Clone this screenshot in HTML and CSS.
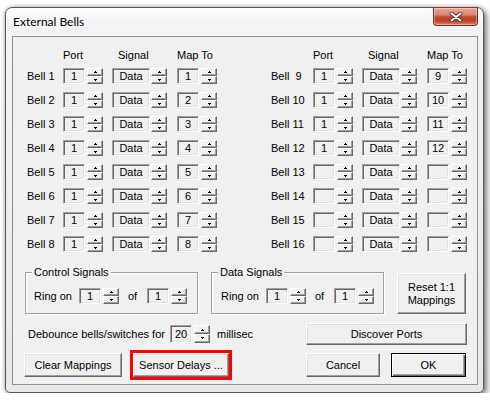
FILE: index.html
```html
<!DOCTYPE html>
<html>
<head>
<meta charset="utf-8">
<title>External Bells</title>
<link rel="stylesheet" href="styles.css">
</head>
<body>
<div class="window">
  <div class="titlebar">
    <span class="title">External Bells</span>
    <span class="close"><svg width="14" height="10" viewBox="0 0 14 10"><path d="M2.5 1.5 L11.5 8.5 M11.5 1.5 L2.5 8.5" stroke="#3b3b3b" stroke-width="3.6" stroke-linecap="round"/><path d="M2.5 1.5 L11.5 8.5 M11.5 1.5 L2.5 8.5" stroke="#fff" stroke-width="1.8" stroke-linecap="round"/></svg></span>
  </div>
  <div class="client">
    <div class="bells">
      <div class="col">
        <div class="hdr"><span class="h-port">Port</span><span class="h-sig">Signal</span><span class="h-map">Map To</span></div>
        <div class="row"><span class="lbl">Bell 1</span><span class="f f-port"><span class="box w22">1</span><span class="ud"><b class="u"></b><b class="d"></b></span></span><span class="f f-sig"><span class="box w38">Data</span><span class="ud"><b class="u"></b><b class="d"></b></span></span><span class="f f-map"><span class="box w22">1</span><span class="ud"><b class="u"></b><b class="d"></b></span></span></div>
        <div class="row"><span class="lbl">Bell 2</span><span class="f f-port"><span class="box w22">1</span><span class="ud"><b class="u"></b><b class="d"></b></span></span><span class="f f-sig"><span class="box w38">Data</span><span class="ud"><b class="u"></b><b class="d"></b></span></span><span class="f f-map"><span class="box w22">2</span><span class="ud"><b class="u"></b><b class="d"></b></span></span></div>
        <div class="row"><span class="lbl">Bell 3</span><span class="f f-port"><span class="box w22">1</span><span class="ud"><b class="u"></b><b class="d"></b></span></span><span class="f f-sig"><span class="box w38">Data</span><span class="ud"><b class="u"></b><b class="d"></b></span></span><span class="f f-map"><span class="box w22">3</span><span class="ud"><b class="u"></b><b class="d"></b></span></span></div>
        <div class="row"><span class="lbl">Bell 4</span><span class="f f-port"><span class="box w22">1</span><span class="ud"><b class="u"></b><b class="d"></b></span></span><span class="f f-sig"><span class="box w38">Data</span><span class="ud"><b class="u"></b><b class="d"></b></span></span><span class="f f-map"><span class="box w22">4</span><span class="ud"><b class="u"></b><b class="d"></b></span></span></div>
        <div class="row"><span class="lbl">Bell 5</span><span class="f f-port"><span class="box w22">1</span><span class="ud"><b class="u"></b><b class="d"></b></span></span><span class="f f-sig"><span class="box w38">Data</span><span class="ud"><b class="u"></b><b class="d"></b></span></span><span class="f f-map"><span class="box w22">5</span><span class="ud"><b class="u"></b><b class="d"></b></span></span></div>
        <div class="row"><span class="lbl">Bell 6</span><span class="f f-port"><span class="box w22">1</span><span class="ud"><b class="u"></b><b class="d"></b></span></span><span class="f f-sig"><span class="box w38">Data</span><span class="ud"><b class="u"></b><b class="d"></b></span></span><span class="f f-map"><span class="box w22">6</span><span class="ud"><b class="u"></b><b class="d"></b></span></span></div>
        <div class="row"><span class="lbl">Bell 7</span><span class="f f-port"><span class="box w22">1</span><span class="ud"><b class="u"></b><b class="d"></b></span></span><span class="f f-sig"><span class="box w38">Data</span><span class="ud"><b class="u"></b><b class="d"></b></span></span><span class="f f-map"><span class="box w22">7</span><span class="ud"><b class="u"></b><b class="d"></b></span></span></div>
        <div class="row"><span class="lbl">Bell 8</span><span class="f f-port"><span class="box w22">1</span><span class="ud"><b class="u"></b><b class="d"></b></span></span><span class="f f-sig"><span class="box w38">Data</span><span class="ud"><b class="u"></b><b class="d"></b></span></span><span class="f f-map"><span class="box w22">8</span><span class="ud"><b class="u"></b><b class="d"></b></span></span></div>
      </div>
      <div class="col col-right">
        <div class="hdr"><span class="h-port">Port</span><span class="h-sig">Signal</span><span class="h-map">Map To</span></div>
        <div class="row"><span class="lbl">Bell&nbsp; 9</span><span class="f f-port"><span class="box w22">1</span><span class="ud"><b class="u"></b><b class="d"></b></span></span><span class="f f-sig"><span class="box w38">Data</span><span class="ud"><b class="u"></b><b class="d"></b></span></span><span class="f f-map"><span class="box w22">9</span><span class="ud"><b class="u"></b><b class="d"></b></span></span></div>
        <div class="row"><span class="lbl">Bell 10</span><span class="f f-port"><span class="box w22">1</span><span class="ud"><b class="u"></b><b class="d"></b></span></span><span class="f f-sig"><span class="box w38">Data</span><span class="ud"><b class="u"></b><b class="d"></b></span></span><span class="f f-map"><span class="box w22">10</span><span class="ud"><b class="u"></b><b class="d"></b></span></span></div>
        <div class="row"><span class="lbl">Bell 11</span><span class="f f-port"><span class="box w22">1</span><span class="ud"><b class="u"></b><b class="d"></b></span></span><span class="f f-sig"><span class="box w38">Data</span><span class="ud"><b class="u"></b><b class="d"></b></span></span><span class="f f-map"><span class="box w22">11</span><span class="ud"><b class="u"></b><b class="d"></b></span></span></div>
        <div class="row"><span class="lbl">Bell 12</span><span class="f f-port"><span class="box w22">1</span><span class="ud"><b class="u"></b><b class="d"></b></span></span><span class="f f-sig"><span class="box w38">Data</span><span class="ud"><b class="u"></b><b class="d"></b></span></span><span class="f f-map"><span class="box w22">12</span><span class="ud"><b class="u"></b><b class="d"></b></span></span></div>
        <div class="row"><span class="lbl">Bell 13</span><span class="f f-port"><span class="box w22"></span><span class="ud"><b class="u"></b><b class="d"></b></span></span><span class="f f-sig"><span class="box w38">Data</span><span class="ud"><b class="u"></b><b class="d"></b></span></span><span class="f f-map"><span class="box w22"></span><span class="ud"><b class="u"></b><b class="d"></b></span></span></div>
        <div class="row"><span class="lbl">Bell 14</span><span class="f f-port"><span class="box w22"></span><span class="ud"><b class="u"></b><b class="d"></b></span></span><span class="f f-sig"><span class="box w38">Data</span><span class="ud"><b class="u"></b><b class="d"></b></span></span><span class="f f-map"><span class="box w22"></span><span class="ud"><b class="u"></b><b class="d"></b></span></span></div>
        <div class="row"><span class="lbl">Bell 15</span><span class="f f-port"><span class="box w22"></span><span class="ud"><b class="u"></b><b class="d"></b></span></span><span class="f f-sig"><span class="box w38">Data</span><span class="ud"><b class="u"></b><b class="d"></b></span></span><span class="f f-map"><span class="box w22"></span><span class="ud"><b class="u"></b><b class="d"></b></span></span></div>
        <div class="row"><span class="lbl">Bell 16</span><span class="f f-port"><span class="box w22"></span><span class="ud"><b class="u"></b><b class="d"></b></span></span><span class="f f-sig"><span class="box w38">Data</span><span class="ud"><b class="u"></b><b class="d"></b></span></span><span class="f f-map"><span class="box w22"></span><span class="ud"><b class="u"></b><b class="d"></b></span></span></div>
      </div>
    </div>

    <div class="groups">
      <div class="group">
        <span class="legend">Control Signals</span>
        <div class="grow"><span class="ring">Ring on</span><span class="f f-port"><span class="box w22">1</span><span class="ud"><b class="u"></b><b class="d"></b></span></span><span class="of">of</span><span class="f f-port"><span class="box w22">1</span><span class="ud"><b class="u"></b><b class="d"></b></span></span></div>
      </div>
      <div class="group group-data">
        <span class="legend">Data Signals</span>
        <div class="grow"><span class="ring">Ring on</span><span class="f f-port"><span class="box w22">1</span><span class="ud"><b class="u"></b><b class="d"></b></span></span><span class="of">of</span><span class="f f-port"><span class="box w22">1</span><span class="ud"><b class="u"></b><b class="d"></b></span></span></div>
      </div>
      <button class="btn btn-reset">Reset 1:1<br>Mappings</button>
    </div>

    <div class="debounce">
      <span class="deb-text">Debounce bells/switches for</span>
      <span class="f f-port f-tall"><span class="box w22">20</span><span class="ud"><b class="u"></b><b class="d"></b></span></span>
      <span class="ms">millisec</span>
      <button class="btn btn-discover">Discover Ports</button>
    </div>

    <div class="actions">
      <button class="btn btn-clear">Clear Mappings</button>
      <button class="btn btn-sensor">Sensor Delays ...</button>
      <button class="btn btn-cancel">Cancel</button>
      <button class="btn btn-ok">OK</button>
    </div>
  </div>
</div>
</body>
</html>
```

FILE: styles.css
```css
* { box-sizing: border-box; }
html, body { margin: 0; padding: 0; background: #fff; }
body {
  font-family: "Liberation Sans", Arial, sans-serif;
  font-size: 11px;
  color: #000;
}

.window {
  margin: 7px 0 0 5px;
  width: 479px;
  height: 386px;
  border: 1px solid #585858;
  border-radius: 7px 7px 5px 5px;
  background: linear-gradient(#fdfdfd 0, #f2f3f4 20px, #e6e9ec 100%);
  box-shadow: 0 0 4px rgba(0,0,0,.3), 3px 3px 6px rgba(0,0,0,.45);
  padding: 0 5px 0 6px;
  display: flex;
  flex-direction: column;
}

.titlebar {
  height: 28px;
  display: flex;
  justify-content: space-between;
  align-items: flex-start;
  padding-left: 1px;
}
.title {
  font-family: Lato, "Liberation Sans", sans-serif;
  font-size: 12px;
  line-height: 28px;
  color: #000;
}
.close {
  width: 45px;
  height: 19px;
  margin-top: -1px;
  border: 1px solid #7a2a1e;
  border-top-color: #8a3a2e;
  border-radius: 0 0 4px 4px;
  background: linear-gradient(#e9a597 0%, #dc8571 40%, #c7472f 52%, #c04028 75%, #d9806a 100%);
  box-shadow: inset 0 0 0 1px rgba(255,255,255,.35);
  display: flex;
  align-items: center;
  justify-content: center;
}

.client {
  width: 466px;
  height: 349px;
  border: 1px solid #8e9093;
  background: #f0f0f0;
  padding: 11px 10px 0 11px;
}

/* bells grid */
.bells { display: flex; gap: 54px; margin-left: 3px; }
.col { display: flex; flex-direction: column; }
.hdr { display: flex; height: 14px; line-height: 14px; margin-bottom: 6px; padding-left: 36px; }
.col-right .hdr { padding-left: 42px; }
.h-port { width: 49px; }
.h-sig { width: 65px; padding-left: 6px; }
.row { display: flex; align-items: center; height: 16px; }
.row + .row { margin-top: 8px; }
.lbl { width: 36px; white-space: pre; }
.col-right .lbl { width: 42px; }

.f { display: flex; }
.f-port, .f-map { gap: 2px; }
.f-sig { gap: 1px; margin-left: 9px; }
.f-map { margin-left: 10px; }

.box {
  height: 16px;
  line-height: 14px;
  text-align: center;
  background: #f0f0f0;
  border: 1px solid;
  border-color: #a0a0a0 #fff #fff #a0a0a0;
  box-shadow: inset 1px 1px 0 #696969, inset -1px -1px 0 #e3e3e3;
}
.w22 { width: 22px; }
.w38 { width: 38px; }

.ud { width: 16px; height: 16px; display: flex; flex-direction: column; }
.ud b {
  flex: 1;
  display: block;
  background: #f0f0f0;
  border: 1px solid;
  border-color: #fff #696969 #696969 #fff;
  box-shadow: inset -1px -1px 0 #a0a0a0;
}
.ud b::before {
  content: "";
  display: block;
  width: 3px;
  height: 2px;
  margin: 2px 0 0 6px;
}
.ud .u::before {
  background:
    linear-gradient(#000, #000) 1px 0 / 1px 1px no-repeat,
    linear-gradient(#000, #000) 0 1px / 3px 1px no-repeat;
}
.ud .d::before {
  background:
    linear-gradient(#000, #000) 0 0 / 3px 1px no-repeat,
    linear-gradient(#000, #000) 1px 1px / 1px 1px no-repeat;
}

/* group boxes */
.groups { display: flex; align-items: flex-start; margin-top: 20px; margin-left: 1px; }
.group {
  position: relative;
  width: 173px;
  height: 42px;
  border: 1px solid #a0a0a0;
  box-shadow: inset 1px 1px 0 #fff, 1px 1px 0 #fff;
  padding: 15px 0 0 8px;
}
.group-data { margin-left: 13px; padding-left: 9px; }
.legend {
  position: absolute;
  top: -7px;
  left: 6px;
  padding: 0 2px;
  line-height: 13px;
  background: #f0f0f0;
}
.grow { display: flex; align-items: center; height: 16px; }
.ring { width: 45px; }
.of { width: 28px; padding-left: 9px; }

/* buttons */
.btn {
  font: inherit;
  color: #000;
  background: #f0f0f0;
  padding: 0;
  border: 1px solid;
  border-color: #fff #696969 #696969 #fff;
  box-shadow: inset -1px -1px 0 #a0a0a0, inset 1px 1px 0 #e3e3e3;
  line-height: 13px;
}
.btn-reset { margin-left: 13px; margin-top: 1px; width: 69px; height: 41px; }

.debounce { display: flex; align-items: center; height: 22px; margin-top: 9px; }
.deb-text { margin-left: 4px; width: 142px; }
.f-tall .box { height: 18px; line-height: 16px; }
.f-tall .ud { height: 18px; }
.f-tall .ud .u::before { margin-top: 3px; }
.ms { margin-left: 7px; }
.btn-discover { margin-left: auto; width: 161px; height: 22px; }

.actions { display: flex; height: 24px; margin-top: 8px; }
.actions .btn { height: 24px; }
.btn-clear { width: 98px; }
.btn-sensor { width: 96px; margin-left: 11px; outline: 3px solid #f00; }
.btn-cancel { width: 74px; margin-left: 77px; }
.btn-ok {
  width: 75px;
  margin-left: 11px;
  border: 1px solid #000;
  box-shadow: inset 1px 1px 0 #fff, inset -1px -1px 0 #696969, inset -2px -2px 0 #a0a0a0;
}
```
